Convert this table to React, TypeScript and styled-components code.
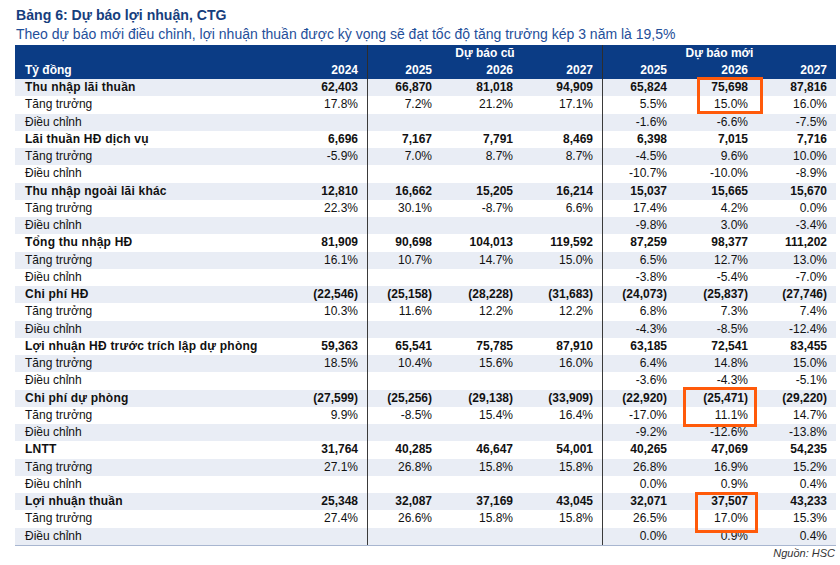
import React from "react";
import styled, { createGlobalStyle } from "styled-components";

const Global = createGlobalStyle`
  html, body { margin: 0; padding: 0; background: #ffffff; }
  body { font-family: "Liberation Sans", Arial, sans-serif; }
`;

const COLS = "271px 81px 74px 81px 80px 74px 81px 79px";
const ROW_H = 17.25;

const Page = styled.div`
  width: 840px;
  height: 565px;
  box-sizing: border-box;
  padding: 6px 4px 0 15px;
  overflow: hidden;
`;

const Title = styled.div`
  font-size: 14.1px;
  font-weight: bold;
  color: #163e7d;
  line-height: 18px;
  padding-left: 1px;
`;

const Subtitle = styled.div`
  font-size: 14px;
  color: #1f4f9a;
  line-height: 21px;
  padding-left: 1px;
  white-space: nowrap;
`;

const TableWrap = styled.div`
  position: relative;
  width: 821px;
  border-bottom: 1px solid #a8b6d0;
`;

const HeaderRow = styled.div`
  display: grid;
  grid-template-columns: ${COLS};
  height: 17px;
  background: #0b3c85;
  color: #ffffff;
  font-size: 12px;
  font-weight: bold;
  line-height: 17px;
`;

const HCell = styled.div<{ $sep?: boolean; $span?: number; $align?: string }>`
  grid-column: span ${(p) => p.$span ?? 1};
  text-align: ${(p) => p.$align ?? "right"};
  padding: ${(p) => (p.$align === "left" ? "0 0 0 10px" : p.$align === "center" ? "0" : "0 9px 0 0")};
  border-left: ${(p) => (p.$sep ? "1px solid #2d2d2d" : "none")};
  white-space: nowrap;
`;

const Row = styled.div<{ $stripe: boolean; $bold: boolean }>`
  display: grid;
  grid-template-columns: ${COLS};
  height: ${ROW_H}px;
  line-height: ${ROW_H}px;
  background: ${(p) => (p.$stripe ? "#e9edf5" : "#ffffff")};
  font-size: 12px;
  font-weight: ${(p) => (p.$bold ? "bold" : "normal")};
  color: #111111;
`;

const Label = styled.div<{ $bold: boolean }>`
  padding-left: 10px;
  white-space: nowrap;
  letter-spacing: ${(p) => (p.$bold ? "0.22px" : "0")};
`;

const Num = styled.div<{ $sep?: boolean }>`
  text-align: right;
  padding-right: 9px;
  white-space: nowrap;
  border-left: ${(p) => (p.$sep ? "1px solid #3a3a3a" : "none")};
`;

const Highlight = styled.div`
  position: absolute;
  box-sizing: border-box;
  border: 3px solid #ff5a0a;
  pointer-events: none;
`;

const Source = styled.div`
  text-align: right;
  font-size: 11px;
  font-style: italic;
  color: #333333;
  line-height: 14px;
  padding-right: 1px;
`;

type R = { label: string; bold?: boolean; v: string[] };

const groups: [string, string[], string[], string[]][] = [
  ["Thu nhập lãi thuần",
    ["62,403", "66,870", "81,018", "94,909", "65,824", "75,698", "87,816"],
    ["17.8%", "7.2%", "21.2%", "17.1%", "5.5%", "15.0%", "16.0%"],
    ["-1.6%", "-6.6%", "-7.5%"]],
  ["Lãi thuần HĐ dịch vụ",
    ["6,696", "7,167", "7,791", "8,469", "6,398", "7,015", "7,716"],
    ["-5.9%", "7.0%", "8.7%", "8.7%", "-4.5%", "9.6%", "10.0%"],
    ["-10.7%", "-10.0%", "-8.9%"]],
  ["Thu nhập ngoài lãi khác",
    ["12,810", "16,662", "15,205", "16,214", "15,037", "15,665", "15,670"],
    ["22.3%", "30.1%", "-8.7%", "6.6%", "17.4%", "4.2%", "0.0%"],
    ["-9.8%", "3.0%", "-3.4%"]],
  ["Tổng thu nhập HĐ",
    ["81,909", "90,698", "104,013", "119,592", "87,259", "98,377", "111,202"],
    ["16.1%", "10.7%", "14.7%", "15.0%", "6.5%", "12.7%", "13.0%"],
    ["-3.8%", "-5.4%", "-7.0%"]],
  ["Chi phí HĐ",
    ["(22,546)", "(25,158)", "(28,228)", "(31,683)", "(24,073)", "(25,837)", "(27,746)"],
    ["10.3%", "11.6%", "12.2%", "12.2%", "6.8%", "7.3%", "7.4%"],
    ["-4.3%", "-8.5%", "-12.4%"]],
  ["Lợi nhuận HĐ trước trích lập dự phòng",
    ["59,363", "65,541", "75,785", "87,910", "63,185", "72,541", "83,455"],
    ["18.5%", "10.4%", "15.6%", "16.0%", "6.4%", "14.8%", "15.0%"],
    ["-3.6%", "-4.3%", "-5.1%"]],
  ["Chi phí dự phòng",
    ["(27,599)", "(25,256)", "(29,138)", "(33,909)", "(22,920)", "(25,471)", "(29,220)"],
    ["9.9%", "-8.5%", "15.4%", "16.4%", "-17.0%", "11.1%", "14.7%"],
    ["-9.2%", "-12.6%", "-13.8%"]],
  ["LNTT",
    ["31,764", "40,285", "46,647", "54,001", "40,265", "47,069", "54,235"],
    ["27.1%", "26.8%", "15.8%", "15.8%", "26.8%", "16.9%", "15.2%"],
    ["0.0%", "0.9%", "0.4%"]],
  ["Lợi nhuận thuần",
    ["25,348", "32,087", "37,169", "43,045", "32,071", "37,507", "43,233"],
    ["27.4%", "26.6%", "15.8%", "15.8%", "26.5%", "17.0%", "15.3%"],
    ["0.0%", "0.9%", "0.4%"]],
];

const rows: R[] = groups.flatMap(([label, main, growth, adj]) => [
  { label, bold: true, v: main },
  { label: "Tăng trưởng", v: growth },
  { label: "Điều chỉnh", v: ["", "", "", "", ...adj] },
]);

const boxes = [
  { left: 682, top: 32, width: 66, height: 37 },
  { left: 668, top: 342, width: 74, height: 40 },
  { left: 680, top: 447, width: 63, height: 41 },
];

export default function App() {
  return (
    <>
      <Global />
      <Page>
        <Title>Bảng 6: Dự báo lợi nhuận, CTG</Title>
        <Subtitle>
          Theo dự báo mới điều chỉnh, lợi nhuận thuần được kỳ vọng sẽ đạt tốc độ tăng trưởng kép 3 năm là 19,5%
        </Subtitle>
        <TableWrap>
          <HeaderRow>
            <HCell $align="left" />
            <HCell />
            <HCell $span={3} $sep $align="center">Dự báo cũ</HCell>
            <HCell $span={3} $sep $align="center">Dự báo mới</HCell>
          </HeaderRow>
          <HeaderRow>
            <HCell $align="left">Tỷ đồng</HCell>
            <HCell>2024</HCell>
            <HCell $sep>2025</HCell>
            <HCell>2026</HCell>
            <HCell>2027</HCell>
            <HCell $sep>2025</HCell>
            <HCell>2026</HCell>
            <HCell>2027</HCell>
          </HeaderRow>
          {rows.map((r, i) => (
            <Row key={i} $stripe={i % 2 === 0} $bold={!!r.bold}>
              <Label $bold={!!r.bold}>{r.label}</Label>
              {r.v.map((val, j) => (
                <Num key={j} $sep={j === 1 || j === 4}>{val}</Num>
              ))}
            </Row>
          ))}
          {boxes.map((b, i) => (
            <Highlight key={i} style={b} />
          ))}
        </TableWrap>
        <Source>Nguồn: HSC</Source>
      </Page>
    </>
  );
}
